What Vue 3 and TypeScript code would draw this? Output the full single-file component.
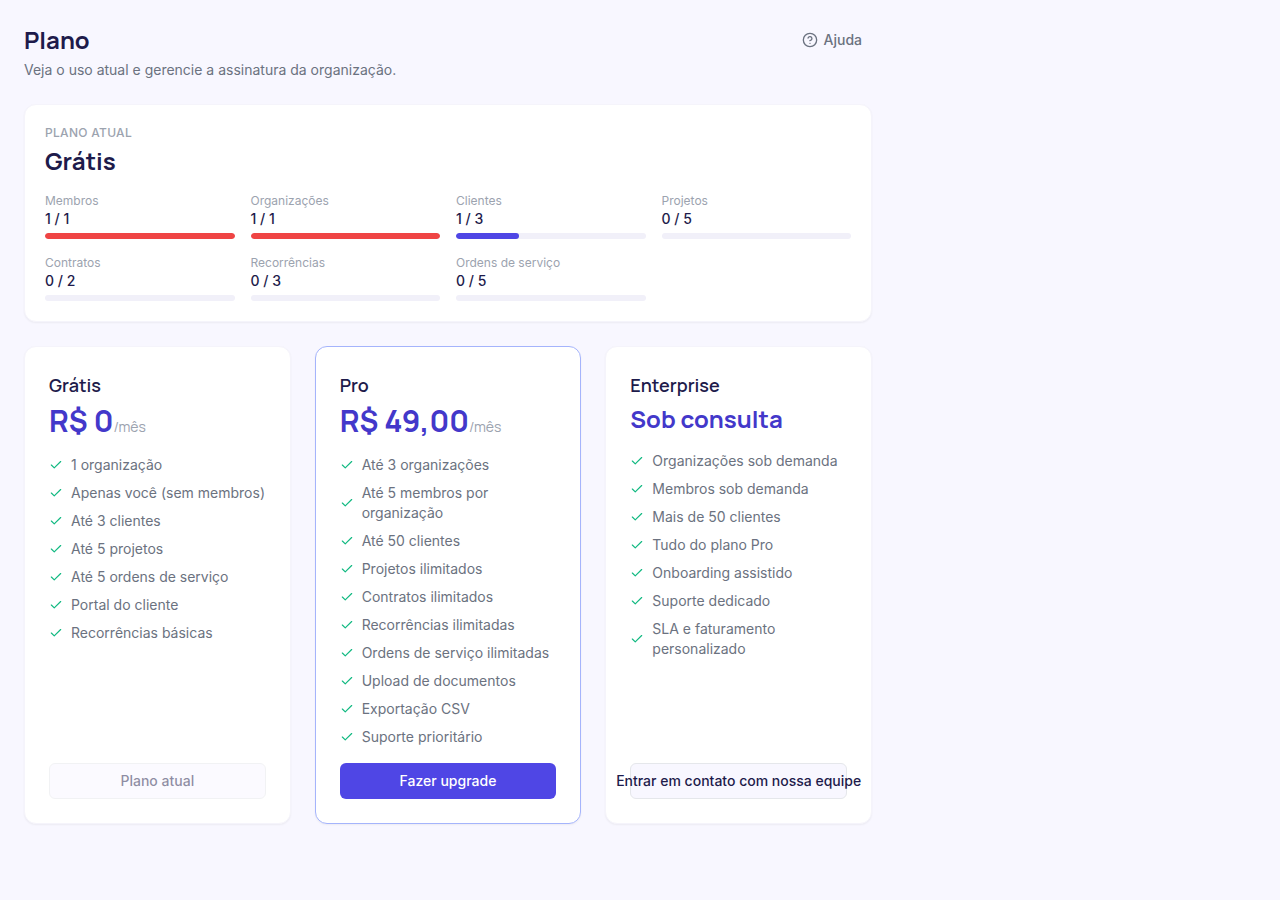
<script setup lang="ts">
interface Usage {
  label: string
  used: number
  limit: number
}

interface Plan {
  name: string
  price: string
  period?: string
  features: string[]
  action: string
  variant: 'primary' | 'secondary'
  disabled?: boolean
  highlighted?: boolean
}

const usage: Usage[] = [
  { label: 'Membros', used: 1, limit: 1 },
  { label: 'Organizações', used: 1, limit: 1 },
  { label: 'Clientes', used: 1, limit: 3 },
  { label: 'Projetos', used: 0, limit: 5 },
  { label: 'Contratos', used: 0, limit: 2 },
  { label: 'Recorrências', used: 0, limit: 3 },
  { label: 'Ordens de serviço', used: 0, limit: 5 },
]

const plans: Plan[] = [
  {
    name: 'Grátis',
    price: 'R$ 0',
    period: '/mês',
    features: [
      '1 organização',
      'Apenas você (sem membros)',
      'Até 3 clientes',
      'Até 5 projetos',
      'Até 5 ordens de serviço',
      'Portal do cliente',
      'Recorrências básicas',
    ],
    action: 'Plano atual',
    variant: 'secondary',
    disabled: true,
  },
  {
    name: 'Pro',
    price: 'R$ 49,00',
    period: '/mês',
    features: [
      'Até 3 organizações',
      'Até 5 membros por organização',
      'Até 50 clientes',
      'Projetos ilimitados',
      'Contratos ilimitados',
      'Recorrências ilimitadas',
      'Ordens de serviço ilimitadas',
      'Upload de documentos',
      'Exportação CSV',
      'Suporte prioritário',
    ],
    action: 'Fazer upgrade',
    variant: 'primary',
    highlighted: true,
  },
  {
    name: 'Enterprise',
    price: 'Sob consulta',
    features: [
      'Organizações sob demanda',
      'Membros sob demanda',
      'Mais de 50 clientes',
      'Tudo do plano Pro',
      'Onboarding assistido',
      'Suporte dedicado',
      'SLA e faturamento personalizado',
    ],
    action: 'Entrar em contato com nossa equipe',
    variant: 'secondary',
  },
]

const percent = (item: Usage): number => Math.min(100, (item.used / item.limit) * 100)
</script>

<template>
  <main class="page">
    <header class="header">
      <div>
        <h1 class="title">Plano</h1>
        <p class="subtitle">Veja o uso atual e gerencie a assinatura da organização.</p>
      </div>
      <button type="button" class="help">
        <svg viewBox="0 0 24 24" aria-hidden="true">
          <circle cx="12" cy="12" r="10" />
          <path d="M9.09 9a3 3 0 0 1 5.83 1c0 2-3 3-3 3" />
          <path d="M12 17h.01" />
        </svg>
        Ajuda
      </button>
    </header>

    <section class="card current">
      <p class="eyebrow">Plano atual</p>
      <h2 class="current-name">Grátis</h2>
      <div class="usage">
        <div v-for="item in usage" :key="item.label">
          <p class="usage-label">{{ item.label }}</p>
          <p class="usage-value">{{ item.used }} / {{ item.limit }}</p>
          <div class="track">
            <div
              class="fill"
              :class="{ full: item.used >= item.limit }"
              :style="{ width: percent(item) + '%' }"
            ></div>
          </div>
        </div>
      </div>
    </section>

    <section class="plans">
      <article
        v-for="plan in plans"
        :key="plan.name"
        class="card plan"
        :class="{ highlighted: plan.highlighted }"
      >
        <h3 class="plan-name">{{ plan.name }}</h3>
        <p class="price" :class="{ custom: !plan.period }">
          {{ plan.price }}<span v-if="plan.period" class="period">{{ plan.period }}</span>
        </p>
        <ul class="features">
          <li v-for="feature in plan.features" :key="feature">
            <svg viewBox="0 0 24 24" aria-hidden="true"><path d="M20 6 9 17l-5-5" /></svg>
            <span>{{ feature }}</span>
          </li>
        </ul>
        <button type="button" class="action" :class="plan.variant" :disabled="plan.disabled">
          {{ plan.action }}
        </button>
      </article>
    </section>
  </main>
</template>

<style>
body {
  background: #f8f7ff;
}
</style>

<style scoped>
.page {
  box-sizing: border-box;
  max-width: 896px;
  padding: 24px;
  display: flex;
  flex-direction: column;
  gap: 24px;
  font-family: Inter, "Liberation Sans", sans-serif;
  font-size: 14px;
  line-height: 20px;
  color: #1e1b4b;
}

h1,
h2,
h3,
p,
ul {
  margin: 0;
  padding: 0;
}

button {
  font: inherit;
  font-weight: 500;
}

.header {
  display: flex;
  align-items: flex-start;
  justify-content: space-between;
}

.title,
.current-name,
.plan-name,
.price {
  font-family: Manrope, Inter, sans-serif;
}

.title,
.current-name {
  font-size: 24px;
  line-height: 32px;
  font-weight: 700;
}

.subtitle {
  margin-top: 4px;
  color: #6b7280;
}

.help {
  display: inline-flex;
  align-items: center;
  gap: 6px;
  height: 32px;
  padding: 0 10px;
  border: 0;
  border-radius: 6px;
  background: transparent;
  color: #6b7280;
}

.help svg {
  width: 16px;
  height: 16px;
}

svg {
  flex-shrink: 0;
  fill: none;
  stroke: currentColor;
  stroke-width: 2;
  stroke-linecap: round;
  stroke-linejoin: round;
}

.card {
  background: #ffffff;
  border: 1px solid #f5f4fb;
  border-radius: 12px;
  box-shadow: 0 1px 2px rgba(0, 0, 0, 0.05);
}

.current {
  padding: 20px;
}

.eyebrow {
  font-size: 12px;
  line-height: 16px;
  font-weight: 500;
  letter-spacing: 0.3px;
  text-transform: uppercase;
  color: #9ca3af;
}

.current-name {
  margin-top: 4px;
}

.usage {
  margin-top: 16px;
  display: grid;
  grid-template-columns: repeat(4, minmax(0, 1fr));
  gap: 16px;
}

.usage-label {
  font-size: 12px;
  line-height: 16px;
  color: #9ca3af;
}

.usage-value {
  font-weight: 500;
}

.track {
  margin-top: 4px;
  height: 6px;
  border-radius: 3px;
  background: #f1f0f9;
  overflow: hidden;
}

.fill {
  height: 100%;
  border-radius: 3px;
  background: #4f46e5;
}

.fill.full {
  background: #ef4444;
}

.plans {
  display: grid;
  grid-template-columns: repeat(3, minmax(0, 1fr));
  gap: 24px;
}

.plan {
  display: flex;
  flex-direction: column;
  padding: 24px;
}

.plan.highlighted {
  border-color: #a5b4fc;
}

.plan-name {
  font-size: 18px;
  line-height: 28px;
  font-weight: 600;
}

.price {
  margin-top: 4px;
  font-size: 30px;
  line-height: 36px;
  font-weight: 700;
  color: #4338ca;
}

.price.custom {
  font-size: 24px;
  line-height: 32px;
}

.period {
  font-size: 14px;
  line-height: 20px;
  font-weight: 400;
  color: #9ca3af;
}

.features {
  flex: 1;
  margin: 16px 0;
  list-style: none;
  display: flex;
  flex-direction: column;
  gap: 8px;
  color: #6b7280;
}

.features li {
  display: flex;
  align-items: center;
  gap: 8px;
}

.features svg {
  width: 14px;
  height: 14px;
  color: #10b981;
}

.action {
  display: flex;
  align-items: center;
  justify-content: center;
  height: 36px;
  padding: 0 16px;
  border: 0;
  border-radius: 6px;
  white-space: nowrap;
}

.action.primary {
  background: #4f46e5;
  color: #ffffff;
}

.action.secondary {
  background: #f8f7ff;
  border: 1px solid #e5e7eb;
  color: #1e1b4b;
}

.action:disabled {
  opacity: 0.5;
}
</style>
